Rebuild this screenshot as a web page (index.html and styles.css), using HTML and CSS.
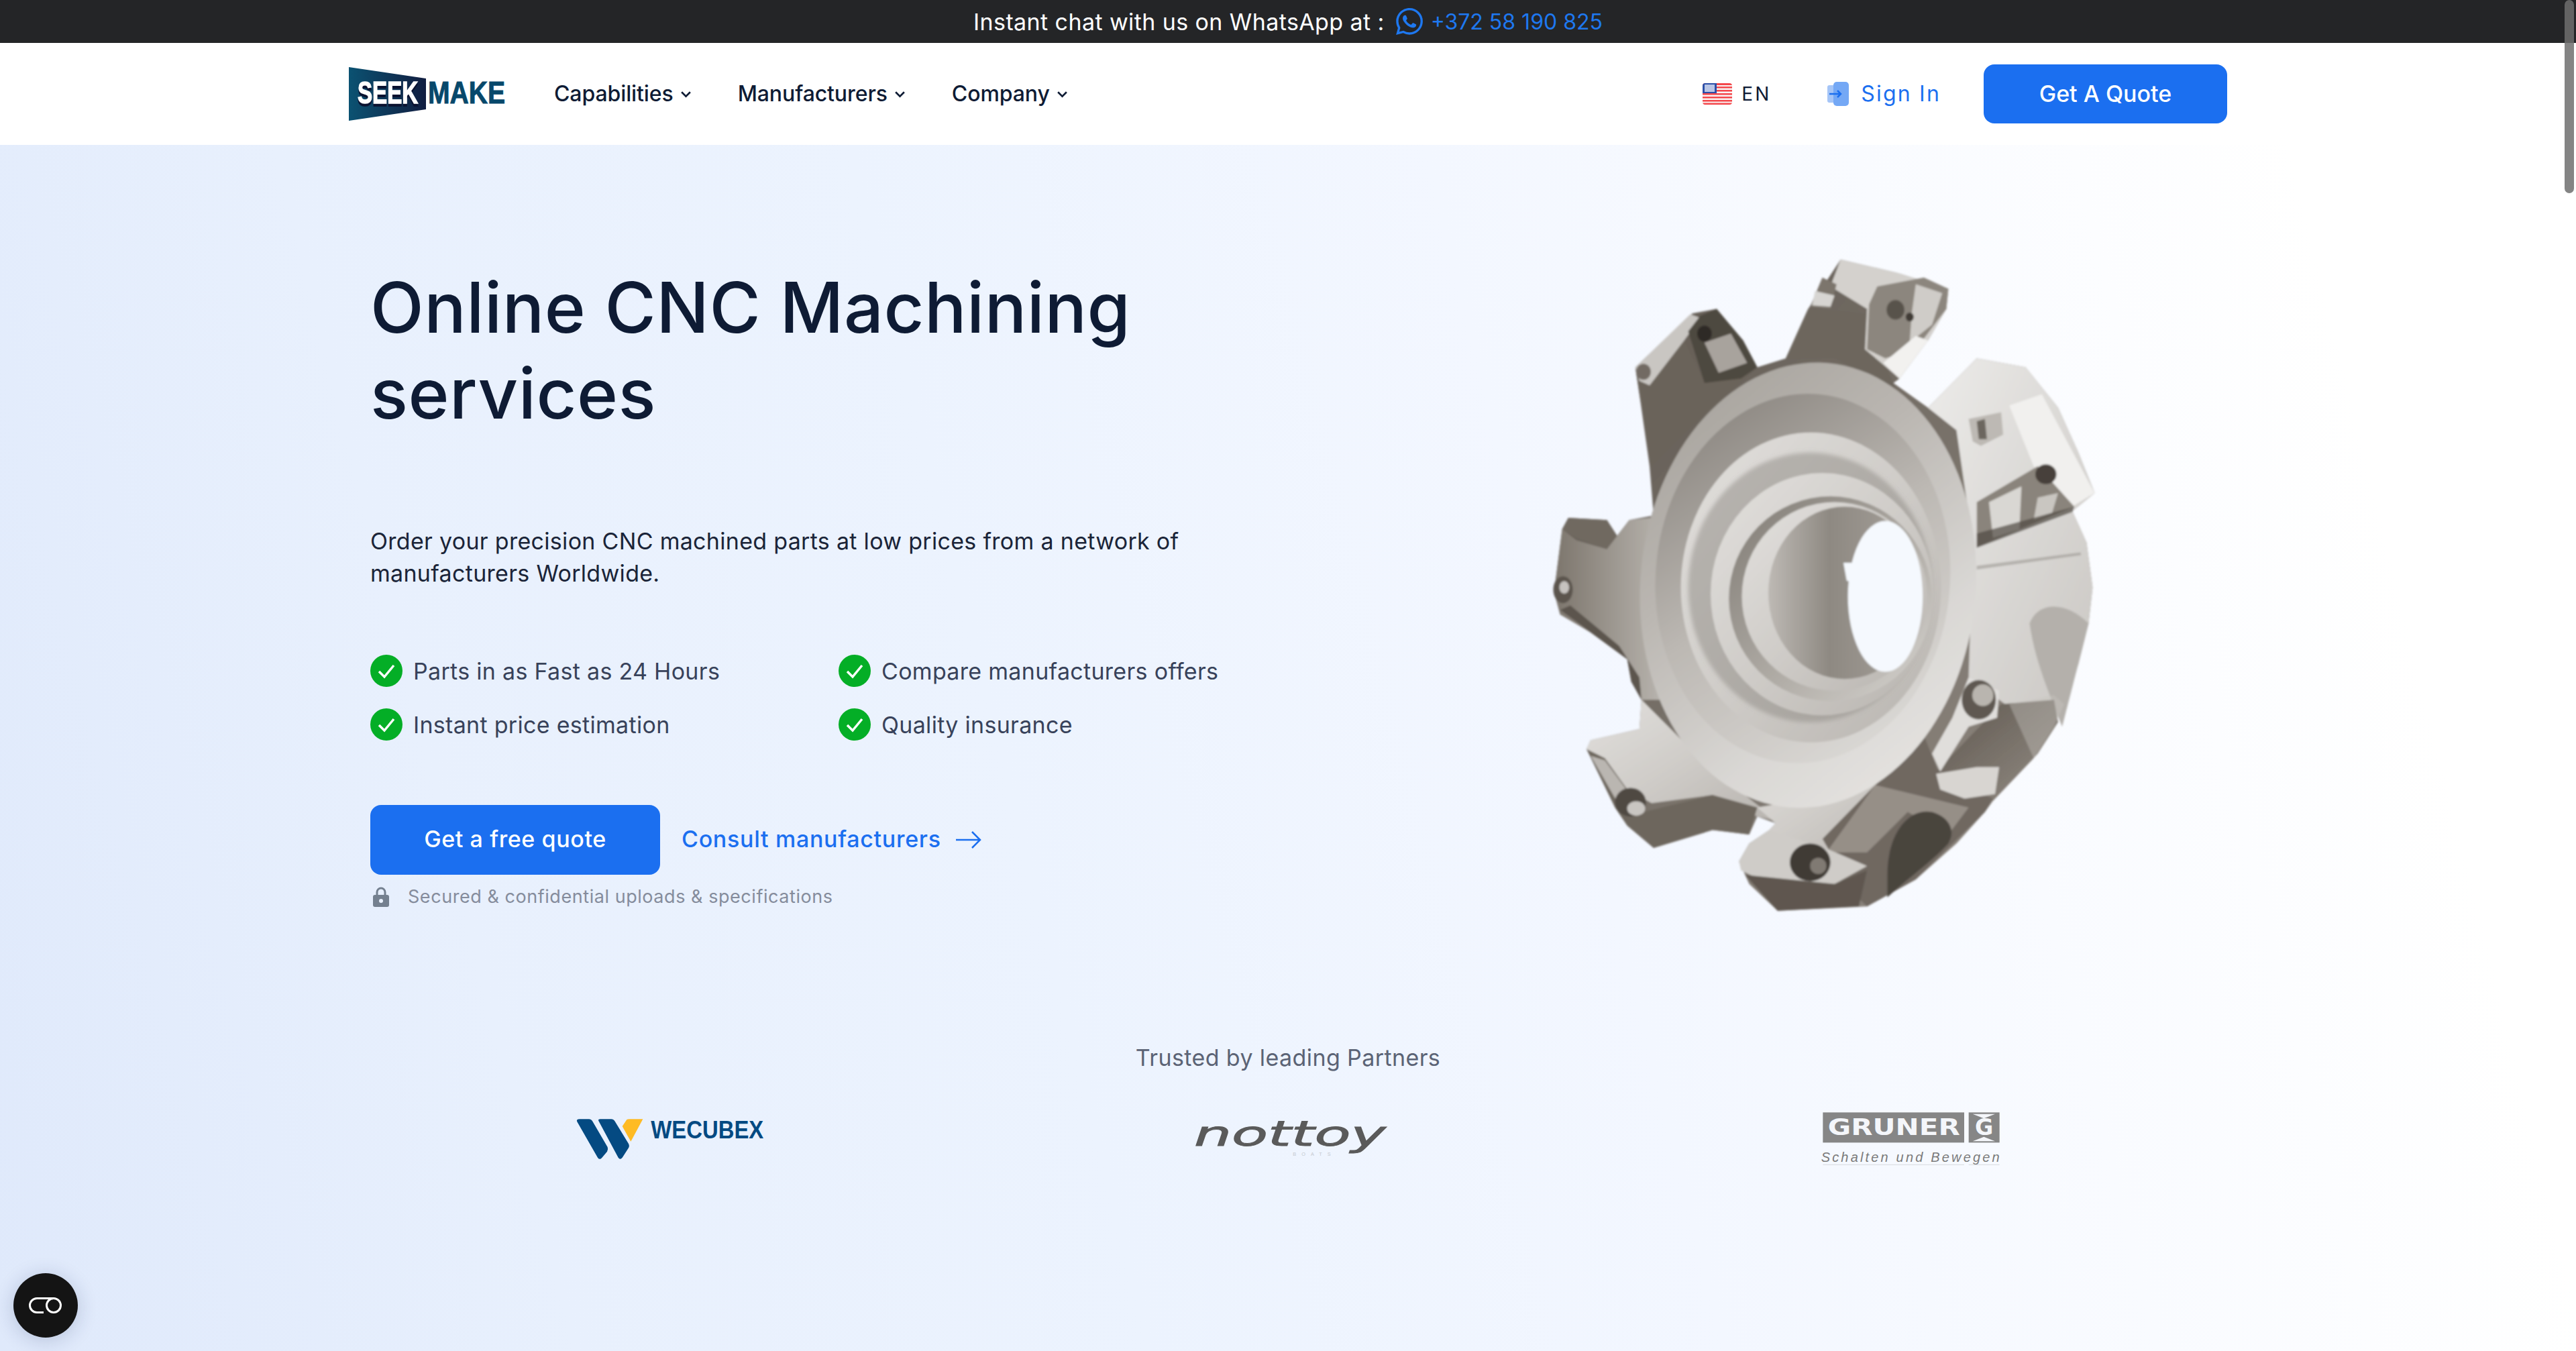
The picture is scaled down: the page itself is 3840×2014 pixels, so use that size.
FILE: index.html
```html
<!DOCTYPE html>
<html>
<head>
  <title>Online CNC Machining services</title>
  <link rel="stylesheet" href="styles.css">
</head>
<body>
  <div class="topbar">
    <span class="topbar-text">Instant chat with us on WhatsApp at :</span>
    <a class="topbar-phone">
      <svg class="wa-icon" viewBox="0 0 24 24"><path fill="#1e78f0" d="M17.472 14.382c-.297-.149-1.758-.867-2.03-.967-.273-.099-.471-.148-.67.15-.197.297-.767.966-.94 1.164-.173.199-.347.223-.644.075-.297-.15-1.255-.463-2.39-1.475-.883-.788-1.48-1.761-1.653-2.059-.173-.297-.018-.458.13-.606.134-.133.298-.347.446-.52.149-.174.198-.298.298-.497.099-.198.05-.371-.025-.52-.075-.149-.669-1.612-.916-2.207-.242-.579-.487-.5-.669-.51-.173-.008-.371-.01-.57-.01-.198 0-.52.074-.792.372-.272.297-1.04 1.016-1.04 2.479 0 1.462 1.065 2.875 1.213 3.074.149.198 2.096 3.2 5.077 4.487.709.306 1.262.489 1.694.625.712.227 1.36.195 1.871.118.571-.085 1.758-.719 2.006-1.413.248-.694.248-1.289.173-1.413-.074-.124-.272-.198-.57-.347m-5.421 7.403h-.004a9.87 9.87 0 01-5.031-1.378l-.361-.214-3.741.982.998-3.648-.235-.374a9.86 9.86 0 01-1.51-5.26c.001-5.45 4.436-9.884 9.888-9.884 2.64 0 5.122 1.03 6.988 2.898a9.825 9.825 0 012.893 6.994c-.003 5.45-4.437 9.884-9.885 9.884m8.413-18.297A11.815 11.815 0 0012.05 0C5.495 0 .16 5.335.157 11.892c0 2.096.547 4.142 1.588 5.945L.057 24l6.305-1.654a11.882 11.882 0 005.683 1.448h.005c6.554 0 11.89-5.335 11.893-11.893a11.821 11.821 0 00-3.48-8.413z"/></svg>
      +372 58 190 825
    </a>
  </div>

  <div class="nav">
    <svg class="logo" viewBox="0 0 260 100">
      <defs>
        <linearGradient id="logoBg" x1="0" x2="1" y1="0" y2="0">
          <stop offset="0" stop-color="#0b5272"/>
          <stop offset="1" stop-color="#111d40"/>
        </linearGradient>
      </defs>
      <polygon points="10,10 125,27 125,73 10,90" fill="url(#logoBg)"/>
      <text class="logo-seek" transform="translate(23 64) scale(.72 1)">SEEK</text>
      <text class="logo-make" transform="translate(128 64) scale(.85 1)">MAKE</text>
    </svg>
    <div class="menu">
      <a class="menu-item">Capabilities <svg class="chevron" viewBox="0 0 16 10"><path d="M2 2l6 6 6-6"/></svg></a>
      <a class="menu-item">Manufacturers <svg class="chevron" viewBox="0 0 16 10"><path d="M2 2l6 6 6-6"/></svg></a>
      <a class="menu-item">Company <svg class="chevron" viewBox="0 0 16 10"><path d="M2 2l6 6 6-6"/></svg></a>
    </div>
    <div class="nav-right">
      <a class="lang">
        <svg class="flag" viewBox="0 0 44 32">
          <clipPath id="flagClip"><rect width="44" height="32" rx="4"/></clipPath>
          <g clip-path="url(#flagClip)">
            <rect width="44" height="32" fill="#f9f4f4"/>
            <rect y="0" width="44" height="3" fill="#f4474b"/>
            <rect y="5" width="44" height="2.500" fill="#f4474b"/>
            <rect y="10" width="44" height="2.500" fill="#f4474b"/>
            <rect y="15" width="44" height="2.500" fill="#f4474b"/>
            <rect y="20" width="44" height="2.500" fill="#f4474b"/>
            <rect y="25" width="44" height="2.500" fill="#f4474b"/>
            <rect y="29.500" width="44" height="2.500" fill="#f4474b"/>
            <rect width="21" height="15" fill="#2b4fa8"/>
            <rect x="3" y="2" width="15" height="11" fill="#b9c6e6"/>
          </g>
        </svg>
        EN
      </a>
      <a class="signin">
        <svg class="signin-icon" viewBox="0 0 32 36">
          <rect x="0" y="5" width="16" height="26" rx="3" fill="#a5c5f7"/>
          <rect x="9" y="0" width="23" height="36" rx="5" fill="#74a8f5"/>
          <path d="M3 18h17M15 13l5 5-5 5" fill="none" stroke="#1b6ff0" stroke-width="2.500"/>
        </svg>
        Sign In
      </a>
      <a class="btn-quote">Get A Quote</a>
    </div>
  </div>

  <div class="hero">
    <div class="hero-top">
      <div class="hero-copy">
        <h1>Online CNC Machining<br>services</h1>
        <p class="lead">Order your precision CNC machined parts at low prices from a network of<br>manufacturers Worldwide.</p>
        <div class="checks">
          <div class="check"><svg class="check-icon" viewBox="0 0 48 48"><circle cx="24" cy="24" r="24" fill="#04ae26"/><path d="M13 25l8 8 14-17" fill="none" stroke="#fff" stroke-width="3.500"/></svg>Parts in as Fast as 24 Hours</div>
          <div class="check"><svg class="check-icon" viewBox="0 0 48 48"><circle cx="24" cy="24" r="24" fill="#04ae26"/><path d="M13 25l8 8 14-17" fill="none" stroke="#fff" stroke-width="3.500"/></svg>Compare manufacturers offers</div>
          <div class="check"><svg class="check-icon" viewBox="0 0 48 48"><circle cx="24" cy="24" r="24" fill="#04ae26"/><path d="M13 25l8 8 14-17" fill="none" stroke="#fff" stroke-width="3.500"/></svg>Instant price estimation</div>
          <div class="check"><svg class="check-icon" viewBox="0 0 48 48"><circle cx="24" cy="24" r="24" fill="#04ae26"/><path d="M13 25l8 8 14-17" fill="none" stroke="#fff" stroke-width="3.500"/></svg>Quality insurance</div>
        </div>
        <div class="actions">
          <a class="btn-free">Get a free quote</a>
          <a class="consult">Consult manufacturers
            <svg class="arrow" viewBox="0 0 38 28"><path d="M0 14h36M24 2l12 12-12 12" fill="none" stroke="#1b6ff0" stroke-width="2.500"/></svg>
          </a>
        </div>
        <div class="secure">
          <svg class="lock" viewBox="0 0 24 30"><path d="M6 13V8a6 6 0 0112 0v5" fill="none" stroke="#74808f" stroke-width="3"/><rect y="12" width="24" height="18" rx="3" fill="#74808f"/><circle cx="12" cy="21" r="3" fill="#eaf1fd"/></svg>
          Secured &amp; confidential uploads &amp; specifications
        </div>
      </div>

      <svg class="cutter" viewBox="0 0 1568 1568" preserveAspectRatio="none">
        <defs>
          <linearGradient id="faceGrad" x1="0.1" y1="0" x2="0.9" y2="1">
            <stop offset="0" stop-color="#a5a19b"/>
            <stop offset="0.35" stop-color="#bab6b1"/>
            <stop offset="0.7" stop-color="#d9d7d4"/>
            <stop offset="1" stop-color="#e8e6e3"/>
          </linearGradient>
          <linearGradient id="armGrad" x1="0" y1="0" x2="1" y2="0">
            <stop offset="0" stop-color="#7c756c"/>
            <stop offset="0.6" stop-color="#a39e97"/>
            <stop offset="1" stop-color="#bdb9b4"/>
          </linearGradient>
          <linearGradient id="rimGrad" x1="0.1" y1="0" x2="0.8" y2="1">
            <stop offset="0" stop-color="#85807a"/>
            <stop offset="0.5" stop-color="#bcb8b3"/>
            <stop offset="1" stop-color="#dddbd8"/>
          </linearGradient>
          <linearGradient id="ringGrad" x1="0" y1="0" x2="1" y2="1">
            <stop offset="0" stop-color="#e2e0dd"/>
            <stop offset="0.5" stop-color="#cfccc8"/>
            <stop offset="1" stop-color="#b7b3ae"/>
          </linearGradient>
          <linearGradient id="innerGrad" x1="0" y1="0" x2="1" y2="1">
            <stop offset="0" stop-color="#7f7a73"/>
            <stop offset="0.6" stop-color="#b3afa9"/>
            <stop offset="1" stop-color="#d6d4d0"/>
          </linearGradient>
          <linearGradient id="boreGrad" x1="0" y1="0" x2="1" y2="0">
            <stop offset="0" stop-color="#bdb9b4"/>
            <stop offset="0.4" stop-color="#8e8982"/>
            <stop offset="1" stop-color="#a7a29c"/>
          </linearGradient>
          <linearGradient id="darkGrad" x1="0" y1="0" x2="1" y2="1">
            <stop offset="0" stop-color="#5d564e"/>
            <stop offset="1" stop-color="#938c84"/>
          </linearGradient>
          <linearGradient id="whiteGrad" x1="0" y1="0" x2="1" y2="1">
            <stop offset="0" stop-color="#ecebe9"/>
            <stop offset="1" stop-color="#c9c6c2"/>
          </linearGradient>
          <filter id="soft" x="-10%" y="-10%" width="120%" height="120%"><feGaussianBlur stdDeviation="5"/></filter>
          <filter id="softer" x="-10%" y="-10%" width="120%" height="120%"><feGaussianBlur stdDeviation="2.500"/></filter>
        </defs>

        <g filter="url(#softer)">
          <!-- silhouette -->
          <path fill="url(#darkGrad)" d="M815 70L955 100 1080 135 1075 180 1030 250 960 335 945 345 1030 400 1150 290 1270 310 1350 400 1400 500 1440 590 1385 630 1420 700 1435 800 1425 880 1400 970 1365 1060 1340 1100 1290 1180 1190 1275 1170 1300 1100 1370 1000 1450 880 1510 660 1520 590 1460 565 1410 590 1370 640 1340 655 1325 610 1310 590 1350 500 1340 355 1380 290 1330 260 1290 190 1160 200 1140 320 1115 325 1050 300 1010 290 960 200 900 125 860 110 810 130 670 145 645 240 650 265 685 295 650 355 640 345 530 320 370 310 310 450 190 510 180 575 250 610 310 680 290 735 180Z"/>

          <!-- right bright body -->
          <path fill="url(#whiteGrad)" d="M1030 400L1150 290 1270 310 1350 400 1400 500 1440 590 1385 630 1420 700 1435 800 1425 880 1400 970 1365 1060 1340 1100 1220 1060 1130 1000 1140 700 1100 450Z"/>
          <path fill="#f1f0ee" d="M1230 395L1310 370 1440 590 1385 620 1290 530Z"/>
          <path fill="#b4b0ab" d="M1280 880C1300 830 1370 830 1425 880 1400 970 1380 1040 1360 1110 1320 1020 1290 950 1280 880Z"/>
          <path fill="#8f8b85" d="M1150 752L1405 722 1407 728 1150 760Z" opacity=".5"/>
          <!-- right inserts -->
          <path fill="#8a847c" d="M1150 610L1300 530 1390 620 1150 710Z"/>
          <path fill="#d9d7d3" d="M1180 610L1260 575 1255 670 1190 690Z"/>
          <path fill="#c9c6c1" d="M1300 600L1350 590 1335 635 1290 650Z"/>
          <path fill="#4e4842" d="M1150 680L1390 620 1385 632 1150 712Z" opacity=".7"/>
          <ellipse cx="1320" cy="548" rx="26" ry="22" fill="#47413b"/>
          <path fill="#bdb9b4" d="M1130 425L1210 410 1215 460 1160 485 1140 475Z"/>
          <path fill="#6c665f" d="M1150 430L1170 425 1175 470 1155 470Z"/>

          <!-- lower dark segments -->
          <path fill="url(#darkGrad)" d="M1340 1050L1210 1060 1050 1210 1190 1275 1300 1170 1350 1100Z"/>
          <path fill="#c8c5c1" d="M1340 1040L1365 1060 1340 1110 1290 1180 1230 1060Z" opacity=".4"/>
          <path fill="#6f6860" d="M1020 1130L900 1230 770 1350 800 1440 880 1510 1000 1450 1170 1300 1190 1270 1060 1220Z"/>
          <path fill="#968f87" d="M900 1240L1130 1290 1080 1350 980 1300 880 1390 780 1390Z"/>
          <path fill="#4a443e" d="M930 1440C930 1350 980 1290 1040 1300 1080 1310 1100 1340 1080 1370 1040 1410 990 1440 930 1490Z"/>
          <!-- right lower insert -->
          <path fill="#e0dedb" d="M1130 1000L1205 1030 1200 1090 1130 1110 1060 1210 1040 1170 1090 1090Z"/>
          <path fill="#d8d5d1" d="M1050 1215L1150 1200 1205 1200 1195 1260 1120 1270 1060 1250Z"/>
          <ellipse cx="1155" cy="1050" rx="42" ry="44" fill="#5f5951"/>
          <ellipse cx="1165" cy="1040" rx="26" ry="24" fill="#b9b5af"/>

          <!-- top tooth -->
          <path fill="#6d665d" d="M735 180L680 290 800 290 950 360 880 190Z"/>
          <path fill="#d4d1cd" d="M815 70L955 100 1080 135 1075 180 1030 250 960 335 915 300 875 270 880 180 790 130Z"/>
          <path fill="#8c867e" d="M905 130L1020 110 1080 135 1075 180 1000 270 925 290 880 270 885 170Z"/>
          <path fill="#cfccc8" d="M1000 125L1065 145 1040 215 985 255 990 190Z"/>
          <circle cx="950" cy="182" r="22" fill="#59534c"/>
          <circle cx="985" cy="198" r="10" fill="#3f3a35"/>
          <path fill="#f2f1ef" d="M920 300L1000 240 1030 250 960 335Z"/>
          <path fill="#7b746c" d="M770 110L805 125 790 180 740 175Z"/>
          <path fill="#d7d5d2" d="M752 140L800 150 790 175 745 172Z"/>

          <!-- upper left tooth -->
          <path fill="#6a635a" d="M310 310L430 250 480 345 610 310 460 430 350 530 320 370Z"/>
          <path fill="#c9c6c2" d="M310 310L445 192 470 200 430 250 345 350 320 340Z"/>
          <path fill="#4e4841" d="M440 230L470 195 510 180 575 250 610 310 570 335 480 345Z"/>
          <path fill="#a8a39d" d="M480 255L545 235 585 300 515 322Z"/>
          <circle cx="480" cy="235" r="18" fill="#2f2b27"/>
          <circle cx="330" cy="320" r="18" fill="#726b63"/>

          <!-- left tooth -->
          <path fill="#706960" d="M130 670L145 645 240 650 265 685 240 715 165 690Z"/>
          <path fill="url(#armGrad)" d="M165 695L240 715 295 650 400 640 400 1050 325 1050 300 1010 290 960 200 900 125 860 110 810 130 670Z"/>
          <path fill="#5c554d" d="M125 850L290 960 300 1010 325 1050 320 1000 270 930 150 840Z"/>
          <ellipse cx="132" cy="805" rx="24" ry="30" fill="#5b554d"/>
          <ellipse cx="135" cy="800" rx="12" ry="14" fill="#c6c3bf"/>

          <!-- lower left arm -->
          <path fill="url(#ringGrad)" d="M190 1160L200 1140 320 1115 325 1050 480 1190 660 1320 610 1310 500 1262 350 1280 290 1250 230 1180Z"/>
          <path fill="#6d665d" d="M190 1160L235 1180 330 1300 500 1262 610 1290 590 1350 500 1340 355 1380 290 1330 260 1290Z"/>
          <path fill="#bab6b1" d="M200 1175L235 1185 300 1265 270 1285Z"/>
          <ellipse cx="298" cy="1278" rx="38" ry="32" fill="#4f4943"/>
          <ellipse cx="312" cy="1292" rx="22" ry="16" fill="#c9c6c2"/>

          <!-- bottom tooth -->
          <path fill="url(#ringGrad)" d="M655 1325L610 1290 800 1260 1020 1130 900 1240 770 1360 790 1390 610 1380 640 1340Z"/>
          <path fill="#cfccc8" d="M590 1370L640 1340 790 1385 880 1420 800 1460 640 1460 570 1430 565 1410Z"/>
          <path fill="#5e574f" d="M580 1440L800 1460 880 1430 860 1510 660 1520Z"/>
          <ellipse cx="740" cy="1412" rx="50" ry="42" fill="#403b36"/>
          <ellipse cx="760" cy="1420" rx="20" ry="18" fill="#807a73"/>

          <!-- front face and rings -->
          <ellipse cx="735" cy="795" rx="412" ry="497" fill="url(#faceGrad)" transform="rotate(8 735 795)"/>
          <ellipse cx="722" cy="780" rx="362" ry="412" fill="url(#rimGrad)" transform="rotate(8 722 780)"/>
          <ellipse cx="742" cy="800" rx="320" ry="345" fill="url(#ringGrad)"/>
        </g>
        <g filter="url(#soft)">
          <ellipse cx="740" cy="800" rx="300" ry="300" fill="#8f8b85" opacity=".5"/>
        </g>
        <g filter="url(#softer)">
          <ellipse cx="770" cy="815" rx="275" ry="270" fill="url(#ringGrad)"/>
          <ellipse cx="790" cy="825" rx="250" ry="228" fill="url(#innerGrad)"/>
          <ellipse cx="800" cy="820" rx="228" ry="210" fill="url(#ringGrad)"/>
          <ellipse cx="825" cy="812" rx="188" ry="192" fill="url(#boreGrad)"/>
          <ellipse cx="925" cy="820" rx="92" ry="168" fill="#f5f9fe"/>
          <path fill="#f5f9fe" d="M822 745L900 745 900 795 830 785Z"/>
        </g>
      </svg>
    </div>

    <div class="trusted">Trusted by leading Partners</div>
    <div class="partners">
      <div class="partner">
        <svg class="partner-wecubex" viewBox="-84 -105 984 390">
          <path fill="#044a82" d="M28 52Q22 40 40 40H80Q92 40 98 52L164 165Q168 175 162 185L138 214Q128 224 120 212Z"/>
          <path fill="#044a82" d="M124 48Q120 40 132 40H180Q192 40 198 52L258 150Q264 162 256 172L230 212Q220 224 212 212Z"/>
          <path fill="#febb24" d="M230 72L250 42Q254 40 262 40H322L268 140Z"/>
          <text class="wecubex-text" transform="translate(358 125) scale(.88 1)">WECUBEX</text>
        </svg>
      </div>
      <div class="partner">
        <svg class="partner-nottoy" viewBox="-30 -105 960 390">
          <text class="nottoy-text" transform="translate(30 160) scale(1.7 1)">nottoy</text>
          <text class="nottoy-sub" x="472" y="205">BOATS</text>
        </svg>
      </div>
      <div class="partner">
        <svg class="partner-gruner" viewBox="0 0 1278 390">
          <rect x="232" y="115" width="632" height="135" fill="#868686"/>
          <rect x="884" y="115" width="138" height="135" fill="#868686"/>
          <text class="gruner-text" transform="translate(254 215) scale(1.26 1)">GRUNER</text>
          <text class="gruner-g" x="912" y="215">G</text>
          <path fill="#f4f6fa" d="M902 122H1002L952 142ZM902 244H1002L952 224Z"/>
          <text class="gruner-sub" x="224" y="335" textLength="798">Schalten und Bewegen</text>
          <path stroke="#c8cbd0" stroke-width="2" d="M232 349H864M884 349H1022"/>
        </svg>
      </div>
    </div>
  </div>

  <!-- overlays -->
  <div class="scroll-thumb"></div>
  <a class="float-btn">
    <svg viewBox="0 0 50 24"><path d="M22 22.500H12a10.500 10.500 0 010-21H38" fill="none" stroke="#fff" stroke-width="3"/><circle cx="37" cy="12" r="10.500" fill="none" stroke="#fff" stroke-width="3"/></svg>
  </a>
</body>
</html>
```

FILE: styles.css
```css
html, body {
  height: 100%;
}

body {
  margin: 0;
  overflow: hidden;
  font-family: Inter, "Liberation Sans", sans-serif;
  color: #0e1b34;
  display: flex;
  flex-direction: column;
}

/* top bar */
.topbar {
  height: 64px;
  background-color: #242527;
  display: flex;
  justify-content: center;
  align-items: center;
  gap: 17px;
  font-size: 32px;
}

.topbar-text {
  color: #fff;
  font-size: 34px;
  letter-spacing: 0.4px;
}

.topbar-phone {
  color: #1e78f0;
  display: flex;
  align-items: center;
  gap: 12px;
}

.wa-icon {
  width: 40px;
  height: 40px;
}

/* nav */
.nav {
  height: 152px;
  padding: 0 520px;
  background-color: #fff;
  display: flex;
  align-items: center;
  flex-shrink: 0;
}

.logo {
  width: 260px;
  height: 100px;
  margin-left: -10px;
}

.logo text {
  font-family: "Liberation Sans", sans-serif;
  font-weight: 700;
  font-size: 46px;
}

.logo-seek {
  fill: #fff;
  stroke: #fff;
  stroke-width: 1.5;
  filter: drop-shadow(0 4px 0 #0a1230);
}

.logo-make {
  fill: #07486b;
  stroke: #07486b;
  stroke-width: 1;
}

.menu {
  display: flex;
  gap: 69px;
  margin-left: 56px;
}

.menu-item {
  font-size: 32px;
  font-weight: 500;
  letter-spacing: -0.1px;
  display: flex;
  align-items: center;
  gap: 10px;
  padding-bottom: 2px;
}

.chevron {
  width: 17px;
  height: 11px;
  margin-top: 3px;
}

.chevron path {
  fill: none;
  stroke: #0e1b34;
  stroke-width: 2.500;
}

.nav-right {
  margin-left: auto;
  display: flex;
  align-items: center;
}

.lang {
  display: flex;
  align-items: center;
  gap: 14px;
  font-size: 28px;
  letter-spacing: 3px;
  padding-bottom: 1px;
}

.flag {
  width: 44px;
  height: 32px;
}

.signin {
  display: flex;
  align-items: center;
  gap: 18px;
  margin-left: 84px;
  font-size: 32px;
  letter-spacing: 2.200px;
  color: #1b6ff0;
  padding-bottom: 1px;
}

.signin-icon {
  width: 32px;
  height: 36px;
}

.btn-quote {
  margin-left: 64px;
  width: 363px;
  height: 88px;
  padding-bottom: 2px;
  box-sizing: border-box;
  border-radius: 16px;
  background-color: #1b6ff0;
  color: #fff;
  font-size: 34px;
  font-weight: 500;
  display: flex;
  justify-content: center;
  align-items: center;
}

/* hero */
.hero {
  flex: 1;
  background: linear-gradient(76deg, #dfe9fb 0%, #e8f0fd 20%, #ecf3fe 40%, #f3f7ff 60%, #ffffff 90%);
}

.hero-top {
  display: flex;
  align-items: flex-start;
  padding-left: 552px;
}

.hero-copy {
  width: 1698px;
  padding-top: 178px;
  box-sizing: border-box;
}

h1 {
  margin: 0;
  font-size: 104px;
  line-height: 128px;
  font-weight: 500;
  letter-spacing: 0.5px;
}

.lead {
  margin: 133px 0 0;
  font-size: 34px;
  line-height: 48px;
  letter-spacing: 0.3px;
  color: #1a2438;
}

.checks {
  margin-top: 97px;
  width: 1300px;
  display: grid;
  grid-template-columns: 698px 1fr;
  row-gap: 32px;
}

.check {
  display: flex;
  align-items: center;
  gap: 16px;
  font-size: 34px;
  letter-spacing: 0.3px;
  color: #38425a;
}

.check-icon {
  width: 48px;
  height: 48px;
  flex-shrink: 0;
}

.actions {
  margin-top: 96px;
  display: flex;
  align-items: center;
  gap: 32px;
}

.btn-free {
  width: 432px;
  height: 104px;
  padding-bottom: 3px;
  box-sizing: border-box;
  border-radius: 16px;
  background-color: #1b6ff0;
  color: #fff;
  font-size: 34px;
  font-weight: 500;
  letter-spacing: 0.6px;
  display: flex;
  justify-content: center;
  align-items: center;
}

.consult {
  color: #1b6ff0;
  font-size: 34px;
  font-weight: 500;
  letter-spacing: 0.7px;
  padding-bottom: 3px;
  display: flex;
  align-items: center;
  gap: 22px;
}

.arrow {
  width: 38px;
  height: 28px;
  margin-top: 3px;
}

.secure {
  margin-top: 16px;
  padding-left: 4px;
  display: flex;
  align-items: center;
  gap: 28px;
  font-size: 27px;
  letter-spacing: 0.55px;
  color: #858c9c;
}

.lock {
  width: 24px;
  height: 30px;
}

.cutter {
  width: 950px;
  height: 1050px;
  margin-top: 124px;
}

/* partners */
.trusted {
  margin-top: 163px;
  text-align: center;
  font-size: 34px;
  line-height: 48px;
  letter-spacing: 0.4px;
  color: #5b6375;
}

.partners {
  margin: 19px 520px 0;
  display: grid;
  grid-template-columns: repeat(3, 1fr);
}

.partner {
  display: flex;
  justify-content: center;
}

.partner-wecubex {
  width: 328px;
  height: 130px;
}

.partner-nottoy {
  width: 320px;
  height: 130px;
}

.partner-gruner {
  width: 426px;
  height: 130px;
}

.wecubex-text {
  font-family: "Liberation Sans", sans-serif;
  font-weight: 700;
  font-size: 112px;
  fill: #044a82;
}

.nottoy-text {
  font-family: "DejaVu Sans", sans-serif;
  font-style: italic;
  font-size: 156px;
  fill: #5a5a5a;
  stroke: #5a5a5a;
  stroke-width: 3;
}

.nottoy-sub {
  font-family: "Liberation Sans", sans-serif;
  font-size: 22px;
  letter-spacing: 24px;
  fill: #c4c8cf;
}

.gruner-text {
  font-family: "DejaVu Sans", sans-serif;
  font-weight: 700;
  font-size: 100px;
  fill: #f4f6fa;
}

.gruner-g {
  font-family: "DejaVu Sans", sans-serif;
  font-weight: 700;
  font-size: 100px;
  fill: #f4f6fa;
}

.gruner-sub {
  font-family: "Liberation Sans", sans-serif;
  font-style: italic;
  font-size: 60px;
  fill: #7a7a7a;
}

/* things lying over the page */
.scroll-thumb {
  position: fixed;
  top: 0;
  right: 3px;
  width: 14px;
  height: 288px;
  border-radius: 8px;
  background-color: rgba(110, 110, 110, 0.85);
}

.float-btn {
  position: fixed;
  left: 20px;
  bottom: 20px;
  width: 96px;
  height: 96px;
  border-radius: 50%;
  background-color: #141414;
  box-shadow: 0 4px 30px rgba(20, 40, 90, 0.2);
  display: flex;
  justify-content: center;
  align-items: center;
}

.float-btn svg {
  width: 50px;
  height: 24px;
}
```
